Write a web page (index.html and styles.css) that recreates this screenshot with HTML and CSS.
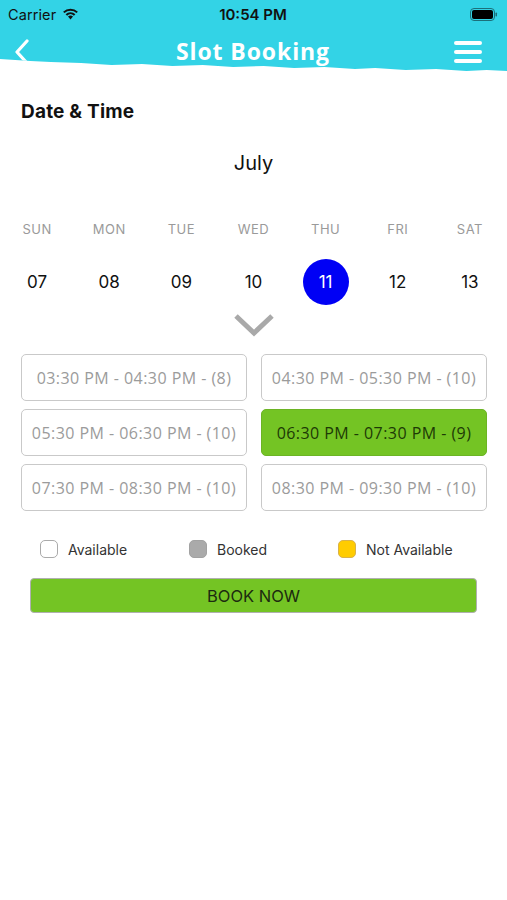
FILE: index.html
```html
<!DOCTYPE html>
<html>
<head>
<meta charset="utf-8">
<link rel="stylesheet" href="styles.css">
</head>
<body>
<div class="screen">
  <header class="header">
    <div class="status">
      <div class="status-left">
        <span class="carrier">Carrier</span>
        <svg class="wifi" width="17" height="13" viewBox="0 0 17 13">
          <path d="M8.5 12.5 L6 9.6 A3.6 3.6 0 0 1 11 9.6 Z" fill="#111"/>
          <path d="M3.6 7.2 A7 7 0 0 1 13.4 7.2 L11.9 8.7 A5 5 0 0 0 5.1 8.7 Z" fill="#111"/>
          <path d="M1.1 4.7 A10.6 10.6 0 0 1 15.9 4.7 L14.5 6.1 A8.6 8.6 0 0 0 2.5 6.1 Z" fill="#111"/>
        </svg>
      </div>
      <span class="time">10:54 PM</span>
      <div class="status-right">
        <svg class="battery" width="28" height="13" viewBox="0 0 28 13">
          <rect x="0.5" y="0.5" width="24" height="12" rx="3.5" fill="none" stroke="#1c6f7a" stroke-width="1"/>
          <rect x="2" y="2" width="21" height="9" rx="2" fill="#000"/>
          <rect x="25.5" y="4.5" width="1.5" height="4" rx="0.7" fill="#1c6f7a"/>
        </svg>
      </div>
    </div>
    <div class="nav">
      <svg class="back" width="20" height="26" viewBox="0 0 20 26">
        <path d="M14 2 L4 13 L14 24" fill="none" stroke="#fff" stroke-width="3.2" stroke-linecap="round" stroke-linejoin="round"/>
      </svg>
      <h1 class="title">Slot Booking</h1>
      <svg class="menu" width="30" height="24" viewBox="0 0 30 24">
        <rect x="1" y="1" width="28" height="4" rx="2" fill="#fff"/>
        <rect x="1" y="10" width="28" height="4" rx="2" fill="#fff"/>
        <rect x="1" y="19" width="28" height="4" rx="2" fill="#fff"/>
      </svg>
    </div>
  </header>

  <h2 class="section-title">Date &amp; Time</h2>
  <div class="month">July</div>

  <div class="week">
    <div class="day"><span class="dname">SUN</span><span class="dnum">07</span></div>
    <div class="day"><span class="dname">MON</span><span class="dnum">08</span></div>
    <div class="day"><span class="dname">TUE</span><span class="dnum">09</span></div>
    <div class="day"><span class="dname">WED</span><span class="dnum">10</span></div>
    <div class="day"><span class="dname">THU</span><span class="dnum selected">11</span></div>
    <div class="day"><span class="dname">FRI</span><span class="dnum">12</span></div>
    <div class="day"><span class="dname">SAT</span><span class="dnum">13</span></div>
  </div>

  <div class="expand">
    <svg width="42" height="24" viewBox="0 0 42 24">
      <path d="M3 3 L21 20 L39 3" fill="none" stroke="#a9a9a9" stroke-width="5" stroke-linejoin="miter"/>
    </svg>
  </div>

  <div class="slots">
    <div class="slot">03:30 PM - 04:30 PM - (8)</div>
    <div class="slot">04:30 PM - 05:30 PM - (10)</div>
    <div class="slot">05:30 PM - 06:30 PM - (10)</div>
    <div class="slot active">06:30 PM - 07:30 PM - (9)</div>
    <div class="slot">07:30 PM - 08:30 PM - (10)</div>
    <div class="slot">08:30 PM - 09:30 PM - (10)</div>
  </div>

  <div class="legend">
    <div class="legend-item"><span class="box available"></span><span>Available</span></div>
    <div class="legend-item"><span class="box booked"></span><span>Booked</span></div>
    <div class="legend-item"><span class="box na"></span><span>Not Available</span></div>
  </div>

  <button class="book">BOOK NOW</button>
</div>
</body>
</html>
```

FILE: styles.css
```css
* { box-sizing: border-box; }
html, body { margin: 0; padding: 0; background: #fff; }
body { font-family: Inter, "Liberation Sans", sans-serif; color: #111; }
.screen { width: 507px; min-height: 900px; background: #fff; }

.header {
  background: #33d3e6;
  height: 76px;
  clip-path: polygon(0 0, 100% 0, 100% 71px, 96% 70px, 92% 71px, 86% 69px, 80% 70px, 74% 68px, 70% 69px, 64% 67px, 58% 68px, 52% 66px, 46% 67px, 40% 65px, 34% 66px, 28% 64px, 22% 65px, 16% 63px, 10% 62px, 6% 61px, 3% 60px, 0 59px);
}
.status {
  height: 28px;
  display: flex;
  align-items: center;
  justify-content: space-between;
  padding: 0 9px 0 8px;
}
.status-left { display: flex; align-items: center; gap: 6px; width: 120px; }
.carrier { font-size: 14.5px; color: #111; letter-spacing: 0.1px; }
.wifi { margin-top: -1px; }
.time { font-size: 15px; font-weight: 600; color: #111; }
.status-right { width: 120px; display: flex; justify-content: flex-end; }

.nav {
  height: 46px;
  display: flex;
  align-items: center;
  justify-content: space-between;
  padding: 0 24px 0 13px;
}
.back { margin-top: 2px; }
.title {
  margin: 0;
  font-family: "Open Sans", "Noto Sans", sans-serif;
  font-weight: 700;
  font-size: 23px;
  letter-spacing: 0.9px;
  color: #fff;
  margin-left: 20px;
  margin-top: -1px;
}
.menu { margin-top: 1px; }

.section-title {
  margin: 25px 0 0 21px;
  font-size: 19px;
  line-height: 22px;
  font-weight: 700;
  color: #111;
  letter-spacing: 0.2px;
}
.month {
  margin-top: 28px;
  text-align: center;
  font-size: 20px;
  line-height: 24px;
  color: #111;
}

.week {
  display: grid;
  grid-template-columns: repeat(7, 1fr);
  margin-top: 46px;
  padding: 0 1px;
}
.day { display: flex; flex-direction: column; align-items: center; }
.dname { font-size: 13px; line-height: 16px; color: #9a9a9a; letter-spacing: 0.5px; }
.dnum {
  margin-top: 22px;
  width: 46px;
  height: 46px;
  border-radius: 50%;
  display: flex;
  align-items: center;
  justify-content: center;
  font-size: 17px;
  color: #111;
}
.dnum.selected { background: #0000f5; color: #fff; }

.expand { display: flex; justify-content: center; margin-top: 8px; height: 24px; }

.slots {
  margin-top: 17px;
  padding: 0 20px 0 21px;
  display: grid;
  grid-template-columns: 1fr 1fr;
  column-gap: 14px;
  row-gap: 8px;
}
.slot {
  height: 47px;
  border: 1.5px solid #c9c9c9;
  border-radius: 5px;
  display: flex;
  align-items: center;
  justify-content: center;
  font-family: "Open Sans", "Noto Sans", sans-serif;
  font-size: 16px;
  letter-spacing: 0.45px;
  color: #9b9b9b;
  white-space: nowrap;
}
.slot.active { background: #74c424; border-color: #6cb424; color: #1d3a06; }

.legend {
  margin-top: 29px;
  display: grid;
  grid-template-columns: 149px 149px 1fr;
  padding-left: 40px;
}
.legend-item { display: flex; align-items: center; gap: 10px; font-size: 14px; color: #333; }
.box { width: 18px; height: 18px; border-radius: 5px; border: 1px solid #aaa; }
.box.available { background: #fff; }
.box.booked { background: #aaa; border-color: #a2a2a2; }
.box.na { background: #ffcc00; border-color: #d9b24a; }

.book {
  display: block;
  margin: 20px 0 0 30px;
  width: 447px;
  height: 35px;
  background: #74c424;
  border: 1px solid #b0b0b0;
  border-radius: 4px;
  font-family: Inter, "Liberation Sans", sans-serif;
  font-size: 16.5px;
  color: #1c2a10;
  padding: 0;
}
```
